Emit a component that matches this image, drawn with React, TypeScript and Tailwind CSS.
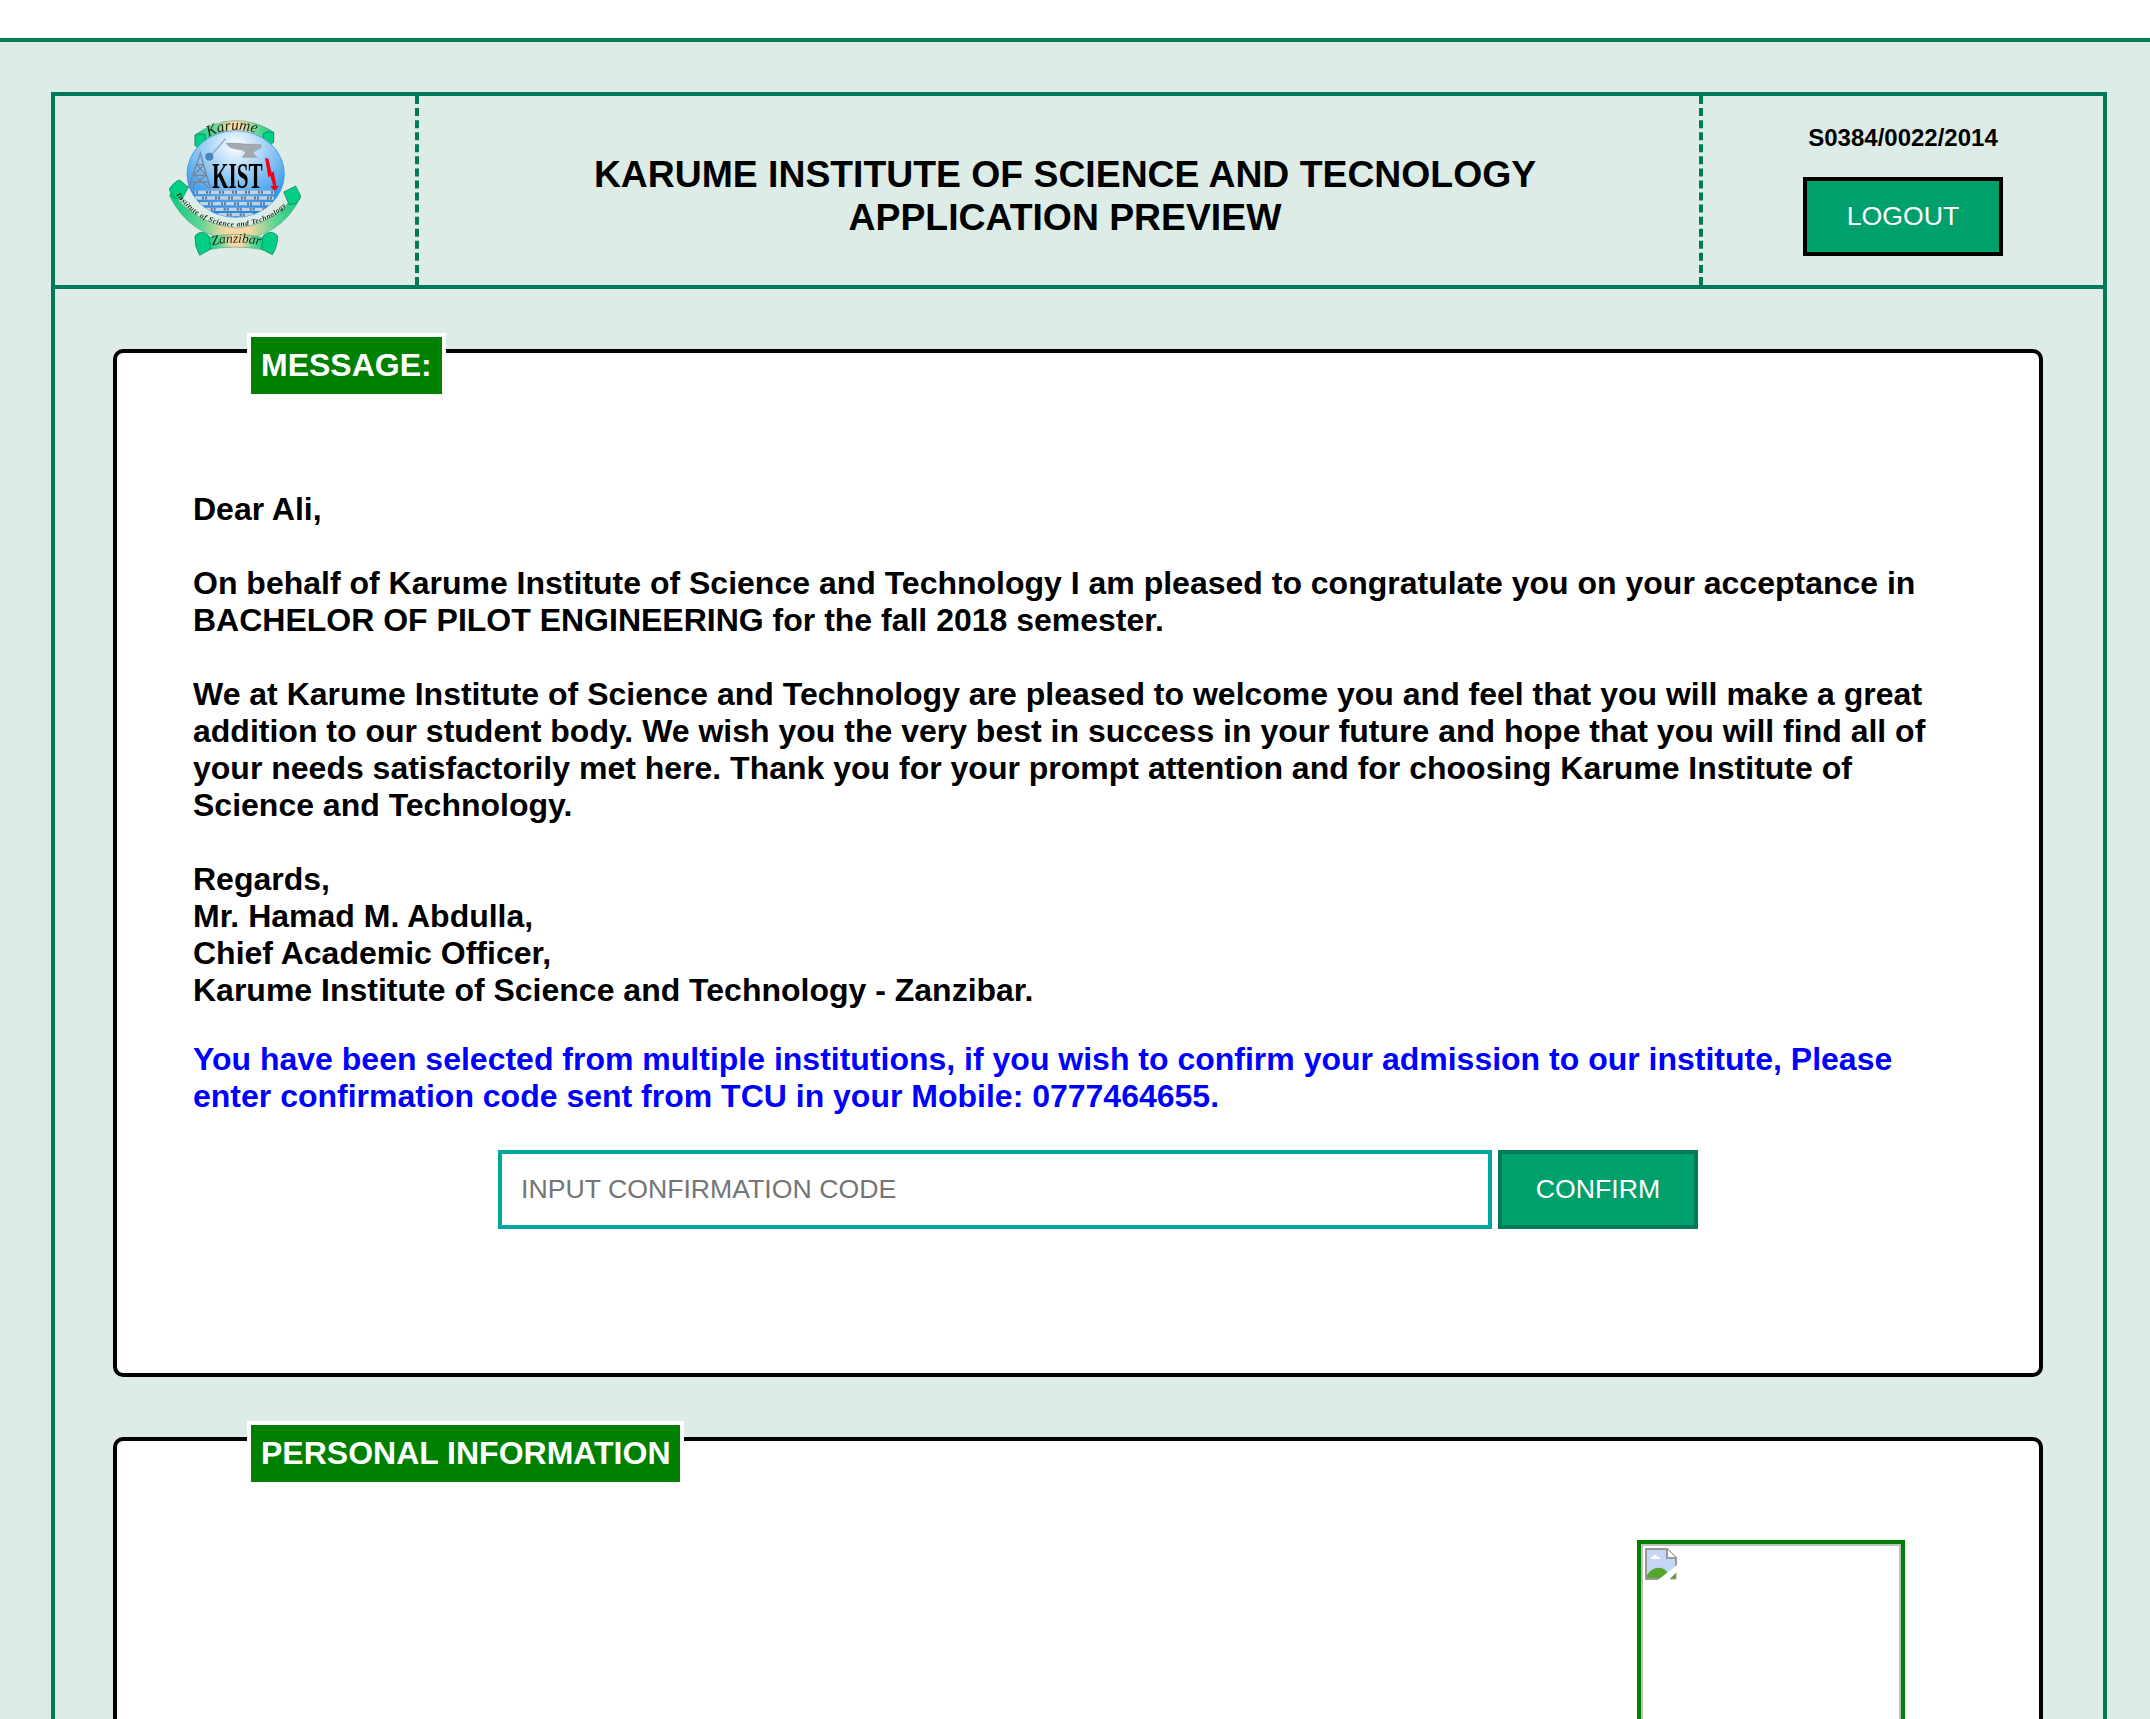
const bricks = [
  { y: 277, x: 186, w: 246, offset: 0 },
  { y: 294, x: 192, w: 236, offset: 18 },
  { y: 311, x: 198, w: 226, offset: 6 },
  { y: 328, x: 222, w: 178, offset: 22 },
  { y: 344, x: 258, w: 110, offset: 10 },
];

function KistLogo() {
  return (
    <svg viewBox="114 57 396 411" width={132} height={137} className="blur-[0.35px]">
      <defs>
        <radialGradient id="globe" cx="50%" cy="18%" r="80%">
          <stop offset="0%" stopColor="#ffffff" />
          <stop offset="38%" stopColor="#a4d2f6" />
          <stop offset="100%" stopColor="#1487ec" />
        </radialGradient>
        <linearGradient id="band" x1="0" x2="1" y1="0" y2="0">
          <stop offset="0%" stopColor="#06c981" />
          <stop offset="24%" stopColor="#62d692" />
          <stop offset="44%" stopColor="#ffd6a6" />
          <stop offset="60%" stopColor="#ffd6a6" />
          <stop offset="80%" stopColor="#62d692" />
          <stop offset="100%" stopColor="#06c981" />
        </linearGradient>
        <clipPath id="globeClip">
          <ellipse cx="314" cy="222" rx="146" ry="130" />
        </clipPath>
        <path id="topArc" d="M232 110 Q312 72 398 106" />
        <path id="midArc" d="M136 284 Q196 372 306 380 Q416 378 476 306" />
        <path id="lowArc" d="M244 436 Q312 420 390 436" />
      </defs>

      <path d="M192 104 Q310 24 428 96 L428 128 Q310 76 192 136 Z" fill="url(#band)" stroke="#4fa97c" strokeWidth="2" />
      <path d="M192 106 Q206 98 222 104 L226 136 L204 148 L192 136 Z" fill="#00cf85" stroke="#0a7a50" strokeWidth="2" />
      <path d="M428 98 Q412 92 398 100 L396 130 L418 136 L428 126 Z" fill="#00cf85" stroke="#0a7a50" strokeWidth="2" />
      <text fontFamily="'Liberation Serif', serif" fontStyle="italic" fontSize="46" fill="#10281a">
        <textPath href="#topArc">Karume</textPath>
      </text>

      <ellipse cx="314" cy="222" rx="146" ry="130" fill="url(#globe)" stroke="#2b8fe0" strokeWidth="2" />

      <g fill="none" stroke="#76869a" strokeWidth="4">
        <path d="M172 264 L208 160 L238 264" />
        <path d="M188 226 L226 226 M180 246 L234 246 M197 194 L219 194" />
        <path d="M188 226 L234 264 M226 226 L176 264 M197 194 L226 226 M219 194 L188 226" />
      </g>
      <path d="M284 116 L242 164" stroke="#9aa5b0" strokeWidth="4" />
      <circle cx="235" cy="170" r="11" fill="#3f88c5" stroke="#4a6f90" strokeWidth="2" />
      <path d="M285 130 Q320 128 340 132 L390 134 L390 144 Q372 150 366 160 L378 172 L334 172 L344 158 Q336 148 318 148 Q296 146 285 130 Z" fill="#a4aab0" stroke="#6b7280" strokeWidth="1" />

      <text x="243" y="264" fontFamily="'Liberation Serif', serif" fontWeight="700" fontSize="108" textLength="152" lengthAdjust="spacingAndGlyphs" fill="#000000">
        KIST
      </text>
      <path d="M402 174 L412 176 L422 218 L428 214 L436 258 L444 258 L431 274 L418 258 L427 258 L418 228 L412 232 Z" fill="#f00010" />

      <g clipPath="url(#globeClip)">
        {bricks.map((row) => (
          <g key={row.y}>
            <rect x={row.x} y={row.y - 5} width={row.w} height="10" fill="#c9d0da" />
            <line
              x1={row.x}
              x2={row.x + row.w}
              y1={row.y}
              y2={row.y}
              stroke="#5f7f9f"
              strokeWidth="9"
              strokeDasharray="6 3 6 24"
              strokeDashoffset={row.offset}
            />
          </g>
        ))}
      </g>

      <path d="M120 272 Q190 372 314 384 Q430 376 490 284 L508 292 Q452 410 314 420 Q176 410 116 288 Z" fill="url(#band)" stroke="#4fa97c" strokeWidth="2" />
      <path d="M114 268 Q130 244 146 240 L172 262 L152 300 L128 292 Z" fill="#00cf85" stroke="#0a7a50" strokeWidth="2" strokeLinejoin="round" />
      <path d="M510 290 L494 258 L458 276 L474 314 L496 310 Z" fill="#00cf85" stroke="#0a7a50" strokeWidth="2" strokeLinejoin="round" />
      <text fontFamily="'Liberation Serif', serif" fontStyle="italic" fontWeight="700" fontSize="22" fill="#1a2b12">
        <textPath href="#midArc" textLength="378" lengthAdjust="spacing">Institute of Science and Technology</textPath>
      </text>

      <path d="M226 414 Q312 392 400 414 L400 450 Q312 432 226 450 Z" fill="url(#band)" stroke="#4fa97c" strokeWidth="2" />
      <path d="M192 408 Q210 386 234 408 L238 448 L206 466 Q190 440 192 408 Z" fill="#00cf85" stroke="#0a7a50" strokeWidth="2" />
      <path d="M440 408 Q420 386 396 408 L392 448 L424 464 Q440 440 440 408 Z" fill="#00cf85" stroke="#0a7a50" strokeWidth="2" />
      <text fontFamily="'Liberation Serif', serif" fontStyle="italic" fontSize="40" fill="#10281a">
        <textPath href="#lowArc">Zanzibar</textPath>
      </text>
    </svg>
  );
}

function BrokenImage() {
  return (
    <svg viewBox="0 0 32 32" width={32} height={32}>
      <path d="M1 1 H22 L31 10 V20 L20 31 H1 Z" fill="#c4d6f5" stroke="#999999" strokeWidth="2" />
      <path d="M22 1 V10 H31" fill="#ffffff" stroke="#999999" strokeWidth="2" />
      <path d="M7 9 Q10 5 13 9 Q16 9 15 11 H6 Q5 9 7 9 Z" fill="#ffffff" />
      <path d="M2 30 V27 Q8 18 16 20 Q21 21 23 26 L18 30 Z" fill="#54a62f" />
      <path d="M32 17 V22 L22 32 H13 Z" fill="#ffffff" />
      <path d="M25 31 L31 25 V31 Z" fill="#54a62f" stroke="#999999" />
    </svg>
  );
}

function SectionCard({ title, children, className }: { title: string; children: React.ReactNode; className: string }) {
  return (
    <section className={`relative rounded-[10px] border-4 border-black bg-white ${className}`}>
      <h2 className="absolute -top-5 left-[130px] border-4 border-white bg-[#008000] px-2.5 py-2.5 text-[32px] leading-[37px] font-bold text-white">
        {title}
      </h2>
      {children}
    </section>
  );
}

export default function App() {
  return (
    <div className="h-[1719px] overflow-hidden bg-[#ddece6] font-['Liberation_Sans',Arial,sans-serif] text-black">
      <div className="h-[42px] border-b-4 border-[#007f5a] bg-white" />

      <main className="mt-[50px] mr-[43px] ml-[51px] border-4 border-b-0 border-[#007a59] pb-10">
        <header className="flex h-[193px] border-b-4 border-[#007a59]">
          <div className="flex w-[360px] justify-center pt-[23px]">
            <KistLogo />
          </div>
          <div className="flex w-[1288px] flex-col justify-center border-x-4 border-dashed border-[#007a59] pt-[11px] pl-3 text-center text-[37.33px] leading-[43px] font-bold">
            <div>KARUME INSTITUTE OF SCIENCE AND TECNOLOGY</div>
            <div>APPLICATION PREVIEW</div>
          </div>
          <div className="flex flex-1 flex-col items-center pt-7">
            <div className="text-2xl leading-7 font-bold">S0384/0022/2014</div>
            <button className="mt-[25px] h-[79px] w-[200px] border-4 border-black bg-[#00a06c] pb-0.5 text-[26.67px] text-white">
              LOGOUT
            </button>
          </div>
        </header>

        <div className="mt-[60px] mr-[60px] ml-[58px]">
          <SectionCard title="MESSAGE:" className="h-[1028px]">
            <div className="px-[76px] pt-[138px] text-[32px] leading-[37px] font-bold">
              <p>Dear Ali,</p>
              <p className="mt-[37px]">
                On behalf of Karume Institute of Science and Technology I am pleased to congratulate you on your
                acceptance in BACHELOR OF PILOT ENGINEERING for the fall 2018 semester.
              </p>
              <p className="mt-[37px]">
                We at Karume Institute of Science and Technology are pleased to welcome you and feel that you will make a
                great addition to our student body. We wish you the very best in success in your future and hope that you
                will find all of your needs satisfactorily met here. Thank you for your prompt attention and for choosing
                Karume Institute of Science and Technology.
              </p>
              <p className="mt-[37px]">
                Regards,
                <br />
                Mr. Hamad M. Abdulla,
                <br />
                Chief Academic Officer,
                <br />
                Karume Institute of Science and Technology - Zanzibar.
              </p>
              <p className="mt-8 text-[#0000ff]">
                You have been selected from multiple institutions, if you wish to confirm your admission to our institute,
                Please enter confirmation code sent from TCU in your Mobile: 0777464655.
              </p>
              <form className="mt-[35px] ml-[305px] flex gap-1.5 font-normal">
                <input
                  placeholder="INPUT CONFIRMATION CODE"
                  className="h-[79px] w-[994px] border-4 border-[#00a79d] bg-white px-[19px] text-[26.67px] outline-none placeholder:text-[#757575]"
                />
                <button type="button" className="h-[79px] w-[200px] border-4 border-[#007a59] bg-[#00a06c] text-[26.67px] text-white">
                  CONFIRM
                </button>
              </form>
            </div>
          </SectionCard>

          <SectionCard title="PERSONAL INFORMATION" className="mt-[60px] h-[600px]">
            <div className="flex justify-end pt-[99px] pr-[134px]">
              <div className="h-[300px] w-[268px] border-4 border-[#008000]">
                <div className="h-full border-2 border-[#c0c0c0] p-0.5">
                  <BrokenImage />
                </div>
              </div>
            </div>
          </SectionCard>
        </div>
      </main>
    </div>
  );
}
